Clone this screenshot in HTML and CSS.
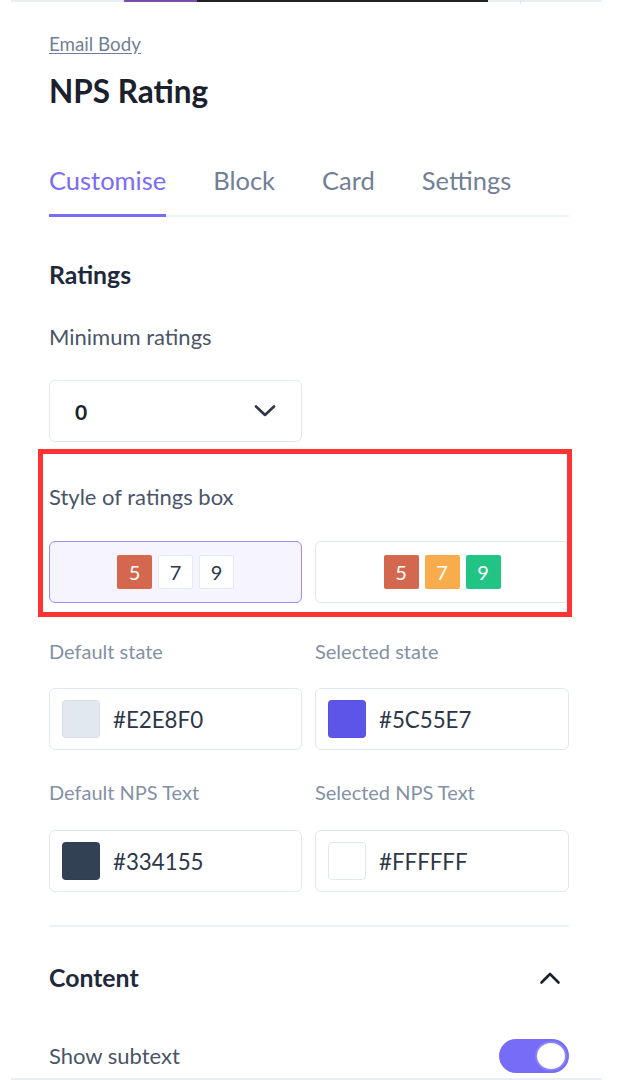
FILE: index.html
```html
<!DOCTYPE html>
<html lang="en">
<head>
<meta charset="utf-8">
<title>NPS Rating</title>
<link rel="stylesheet" href="styles.css">
</head>
<body>
<div class="topbar">
  <span class="seg seg-lead"></span>
  <span class="seg seg-purple"></span>
  <span class="seg seg-black"></span>
  <span class="seg seg-tail"><i class="mark"></i></span>
</div>

<main class="panel">
  <a class="crumb" href="#">Email Body</a>
  <h1 class="title">NPS Rating</h1>

  <nav class="tabs">
    <span class="tab active">Customise</span>
    <span class="tab">Block</span>
    <span class="tab">Card</span>
    <span class="tab">Settings</span>
  </nav>

  <h2 class="section">Ratings</h2>
  <div class="label dark min-label">Minimum ratings</div>
  <div class="select">
    <span class="select-value">0</span>
    <svg class="chev" width="22" height="14" viewBox="0 0 22 14"><path d="M2 2.5 L11 11 L20 2.5" fill="none" stroke="#2d3748" stroke-width="2.6" stroke-linecap="round" stroke-linejoin="round"/></svg>
  </div>

  <div class="label dark style-label">Style of ratings box</div>
  <div class="grid2 cards">
    <div class="style-card selected">
      <span class="sq c-red">5</span>
      <span class="sq plain">7</span>
      <span class="sq plain">9</span>
    </div>
    <div class="style-card">
      <span class="sq c-red">5</span>
      <span class="sq c-orange">7</span>
      <span class="sq c-green">9</span>
    </div>
  </div>

  <div class="grid2 labels">
    <div class="label light">Default state</div>
    <div class="label light">Selected state</div>
  </div>
  <div class="grid2 inputs">
    <div class="color-input"><span class="swatch" style="background:#E2E8F0"></span><span class="hex">#E2E8F0</span></div>
    <div class="color-input"><span class="swatch" style="background:#5C55E7"></span><span class="hex">#5C55E7</span></div>
  </div>

  <div class="grid2 labels labels2">
    <div class="label light">Default NPS Text</div>
    <div class="label light">Selected NPS Text</div>
  </div>
  <div class="grid2 inputs inputs2">
    <div class="color-input"><span class="swatch" style="background:#334155"></span><span class="hex">#334155</span></div>
    <div class="color-input"><span class="swatch swatch-white"></span><span class="hex">#FFFFFF</span></div>
  </div>

  <hr class="divider">

  <div class="collapse-head">
    <h2 class="section">Content</h2>
    <svg class="chev-up" width="22" height="14" viewBox="0 0 22 14"><path d="M2.5 11.5 L11 3 L19.5 11.5" fill="none" stroke="#1a202c" stroke-width="2.6" stroke-linecap="round" stroke-linejoin="round"/></svg>
  </div>

  <div class="toggle-row">
    <span class="label dark">Show subtext</span>
    <span class="toggle"><span class="knob"></span></span>
  </div>
</main>

<div class="bottomline"></div>

<div class="highlight"></div>
</body>
</html>
```

FILE: styles.css
```css
* { box-sizing: border-box; }

html, body {
  margin: 0;
  padding: 0;
  background: #ffffff;
}

body {
  font-family: Lato, "Open Sans", "Liberation Sans", sans-serif;
  color: #1a202c;
  width: 617px;
  height: 1080px;
  overflow: hidden;
  position: relative;
}

/* top strip */
.topbar {
  display: flex;
  height: 2px;
  margin: 0 15px 0 11px;
  background: #e9eef5;
}
.seg { display: block; height: 2px; }
.seg-lead { width: 113px; }
.seg-purple { width: 73px; background: #7a4eab; }
.seg-black { width: 291px; background: #222226; }
.seg-tail { flex: 1; position: relative; }
.mark {
  position: absolute;
  left: 32px;
  top: 0;
  width: 1px;
  height: 4px;
  background: #dfe5ee;
}

.panel {
  padding: 0 48px 0 49px;
  display: flex;
  flex-direction: column;
}

.crumb {
  margin-top: 32px;
  font-size: 18.8px;
  line-height: 20px;
  color: #718096;
  text-decoration: underline;
  text-underline-offset: 2px;
  align-self: flex-start;
}

.title {
  margin: 19px 0 0;
  font-size: 31.5px;
  line-height: 36px;
  font-weight: 700;
  color: #1a202c;
}

.tabs {
  margin-top: 56px;
  display: flex;
  gap: 47px;
  box-shadow: inset 0 -2px 0 #edf2f7;
}
.tab {
  font-size: 25.5px;
  line-height: 30px;
  padding-bottom: 19px;
  border-bottom: 3px solid transparent;
  color: #718096;
}
.tab.active {
  color: #7a6cf7;
  border-bottom-color: #7a6cf7;
}

.section {
  margin: 44px 0 0;
  font-size: 24.8px;
  line-height: 28px;
  font-weight: 700;
  color: #1e293b;
}

.label {
  font-size: 20px;
  line-height: 24px;
}
.label.dark { color: #4a5568; font-size: 22px; }
.label.light { color: #8391a5; }

.panel > .min-label { margin-top: 36px; }

.select {
  margin-top: 31px;
  width: 253px;
  height: 62px;
  border: 1px solid #e2e8f0;
  border-radius: 6px;
  display: flex;
  align-items: center;
  justify-content: space-between;
  padding: 0 25px 0 25px;
}
.select-value {
  font-size: 21px;
  font-weight: 700;
  color: #1a202c;
}

.panel > .style-label { margin-top: 43px; }

.grid2 {
  display: grid;
  grid-template-columns: 253px 254px;
  column-gap: 13px;
}

.cards { margin-top: 32px; }

.style-card {
  height: 62px;
  border: 1px solid #e2e8f0;
  border-radius: 6px;
  display: flex;
  align-items: center;
  justify-content: center;
  gap: 6px;
  background: #ffffff;
}
.style-card.selected {
  background: #f6f4fe;
  border-color: #9a8ffa;
}

.sq {
  width: 35px;
  height: 34px;
  border-radius: 2px;
  display: flex;
  align-items: center;
  justify-content: center;
  font-size: 20px;
  color: #ffffff;
}
.sq.plain {
  background: #ffffff;
  border: 1px solid #e5eaf1;
  color: #2d3748;
}
.c-red { background: #d3684f; }
.c-orange { background: #f9ac4b; }
.c-green { background: #22c486; }

.labels { margin-top: 36px; }
.labels2 { margin-top: 30px; }
.inputs { margin-top: 25px; }
.inputs2 { margin-top: 26px; }

.color-input {
  height: 62px;
  border: 1px solid #e2e8f0;
  border-radius: 6px;
  display: flex;
  align-items: center;
  padding-left: 12px;
  gap: 13px;
}
.swatch {
  width: 38px;
  height: 38px;
  border-radius: 4px;
  border: 1px solid rgba(0, 0, 0, 0.04);
}
.swatch-white {
  background: #ffffff;
  border: 1px solid #e2e8f0;
}
.hex {
  font-size: 22.3px;
  color: #2d3748;
}

.divider {
  margin: 33px 0 0;
  border: 0;
  height: 2px;
  background: #edf2f7;
}

.collapse-head {
  margin-top: 37px;
  display: flex;
  align-items: center;
  justify-content: space-between;
}
.collapse-head .section { margin: 0; }
.chev-up { margin-right: 8px; }

.toggle-row {
  margin-top: 47px;
  display: flex;
  align-items: center;
  justify-content: space-between;
  height: 34px;
}
.toggle {
  width: 70px;
  height: 34px;
  border-radius: 17px;
  background: #766cf8;
  position: relative;
}
.knob {
  position: absolute;
  right: 2px;
  top: 2px;
  width: 32px;
  height: 30px;
  border-radius: 50%;
  background: #ffffff;
  border: 2px solid #8b80fa;
}

.bottomline {
  margin: 5px 15px 0 11px;
  height: 2px;
  background: #e9eef5;
}

.highlight {
  position: absolute;
  left: 38px;
  top: 449px;
  width: 534px;
  height: 168px;
  border: 5px solid #ff3333;
  pointer-events: none;
}
```
